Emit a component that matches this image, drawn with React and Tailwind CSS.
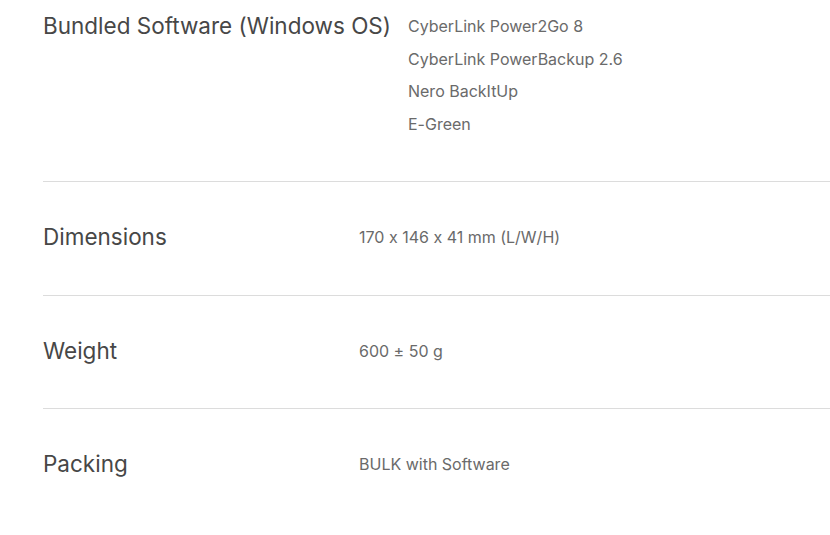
const rows = [
  {
    label: "Bundled Software (Windows OS)",
    values: [
      "CyberLink Power2Go 8",
      "CyberLink PowerBackup 2.6",
      "Nero BackItUp",
      "E-Green",
    ],
  },
  { label: "Dimensions", values: ["170 x 146 x 41 mm (L/W/H)"] },
  { label: "Weight", values: ["600 ± 50 g"] },
  { label: "Packing", values: ["BULK with Software"] },
];

export default function App() {
  return (
    <div
      className="w-[830px] h-[535px] overflow-hidden bg-white pl-[43px] [font-feature-settings:'calt'_0]"
      style={{ fontFamily: "Inter, 'Liberation Sans', sans-serif" }}
    >
      {rows.map((row, i) => (
        <div
          key={row.label}
          className={
            i === 0
              ? "flex items-start pt-[10px] pb-[41px] border-b border-[#dcdcdc]"
              : i === rows.length - 1
              ? "flex items-start pt-[39px] pb-[41px]"
              : "flex items-start pt-[39px] pb-[41px] border-b border-[#dcdcdc]"
          }
        >
          <div className="min-w-[316px] pr-[17px] text-[22.5px] leading-[32.5px] text-[#474747] whitespace-nowrap">
            {row.label}
          </div>
          <div className="flex flex-col text-[16px] leading-[32.5px] text-[#6a6a6a]">
            {row.values.map((v) => (
              <div key={v}>{v}</div>
            ))}
          </div>
        </div>
      ))}
    </div>
  );
}
